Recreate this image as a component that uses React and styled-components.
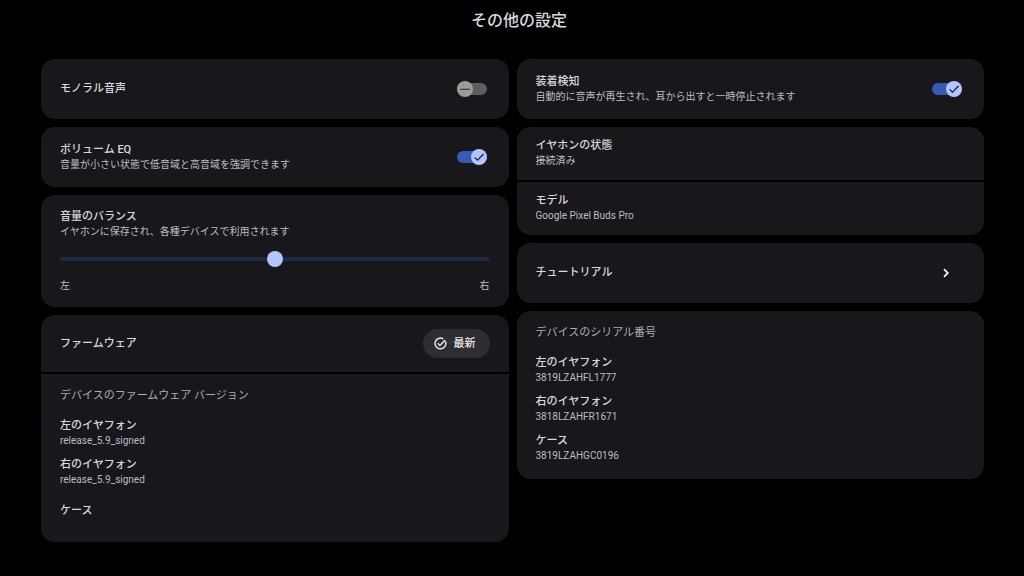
import React, { useId, useState } from 'react'
import styled, { createGlobalStyle } from 'styled-components';


const leftVersions = [
    { name: '左のイヤフォン', value: 'release_5.9_signed' },
    { name: '右のイヤフォン', value: 'release_5.9_signed' },
    { name: 'ケース', value: '' },
];

const serialNumbers = [
    { name: '左のイヤフォン', value: '3819LZAHFL1777' },
    { name: '右のイヤフォン', value: '3818LZAHFR1671' },
    { name: 'ケース', value: '3819LZAHGC0196' },
];


function ToggleRow({ title, description, defaultOn }) {

    const [on, setOn] = useState(Boolean(defaultOn));
    const id = useId();

    return (
        <Row>
            <RowText as="label" htmlFor={id}>
                <Label>{title}</Label>
                {description && <Detail>{description}</Detail>}
            </RowText>
            <Switch>
                <SwitchInput id={id} type="checkbox" checked={on} onChange={() => setOn(!on)} />
                <Knob $on={on}>
                    <svg width="16" height="16" viewBox="0 0 16 16" fill="none" stroke={on ? '#16213f' : '#3f3f42'} strokeWidth="1.3">
                        {on ? <path d="M3.6 8.4l2.9 2.8 6-6.2" /> : <path d="M3.2 8.3h9.6" />}
                    </svg>
                </Knob>
            </Switch>
        </Row>
    )
}

function DeviceList({ heading, items }) {
    return (
        <ListSection>
            <ListHeading>{heading}</ListHeading>
            <List>
                {
                    items.map((item) => (
                        <ListItem key={item.name}>
                            <Label>{item.name}</Label>
                            {item.value && <Detail>{item.value}</Detail>}
                        </ListItem>
                    ))
                }
            </List>
        </ListSection>
    )
}

function App() {

    const [balance, setBalance] = useState(50);

    return (
        <>
            <GlobalStyle />
            <Header>
                <Title>その他の設定</Title>
            </Header>

            <Columns>
                <Column>
                    <Card>
                        <ToggleRow title="モノラル音声" />
                    </Card>

                    <Card>
                        <ToggleRow
                            title="ボリューム EQ"
                            description="音量が小さい状態で低音域と高音域を強調できます"
                            defaultOn
                        />
                    </Card>

                    <Card>
                        <BalanceSection>
                            <RowText as="label" htmlFor="balance">
                                <Label>音量のバランス</Label>
                                <Detail>イヤホンに保存され、各種デバイスで利用されます</Detail>
                            </RowText>
                            <Slider
                                id="balance"
                                type="range"
                                min="0"
                                max="100"
                                value={balance}
                                onChange={(e) => setBalance(Number(e.target.value))}
                            />
                            <SliderEnds>
                                <Detail>左</Detail>
                                <Detail>右</Detail>
                            </SliderEnds>
                        </BalanceSection>
                    </Card>

                    <Card>
                        <FirmwareRow>
                            <Label>ファームウェア</Label>
                            <StatusButton type="button">
                                <svg width="13" height="13" viewBox="0 0 13 13" fill="none" stroke="currentColor" strokeWidth="1.5">
                                    <path d="M11.5 4.6A5.4 5.4 0 1 1 9.3 1.9" />
                                    <path d="M3.7 6.3l2.2 2.2 5.3-5.4" />
                                </svg>
                                最新
                            </StatusButton>
                        </FirmwareRow>
                        <DeviceList heading="デバイスのファームウェア バージョン" items={leftVersions} />
                    </Card>
                </Column>

                <Column>
                    <Card>
                        <ToggleRow
                            title="装着検知"
                            description="自動的に音声が再生され、耳から出すと一時停止されます"
                            defaultOn
                        />
                    </Card>

                    <Card>
                        <InfoRow>
                            <Label>イヤホンの状態</Label>
                            <Detail>接続済み</Detail>
                        </InfoRow>
                        <InfoRow>
                            <Label>モデル</Label>
                            <Detail>Google Pixel Buds Pro</Detail>
                        </InfoRow>
                    </Card>

                    <Card>
                        <LinkRow href="#tutorial">
                            <Label>チュートリアル</Label>
                            <ChevronSlot>
                                <svg width="8" height="10" viewBox="0 0 8 10" fill="none" stroke="#f1f1f4" strokeWidth="1.8">
                                    <path d="M2 1.2L5.8 5 2 8.8" />
                                </svg>
                            </ChevronSlot>
                        </LinkRow>
                    </Card>

                    <Card>
                        <DeviceList heading="デバイスのシリアル番号" items={serialNumbers} />
                    </Card>
                </Column>
            </Columns>
        </>
    )
}

export default App;


const GlobalStyle = createGlobalStyle`
    * {
        box-sizing: border-box;
    }

    body {
        margin: 0;
        background-color: #000;
        color: #d9d8dd;
        font-family: Roboto, "Noto Sans CJK JP", sans-serif;
        font-size: 11px;
        line-height: 16px;
    }
`;


const Header = styled.header`
    padding: 9px 0 26px 14px;
    text-align: center;
`;

const Title = styled.h1`
    margin: 0;
    font-size: 16px;
    line-height: 24px;
    font-weight: 500;
`;

const Columns = styled.main`
    display: grid;
    grid-template-columns: 1fr 1fr;
    align-items: start;
    gap: 8px;
    padding: 0 40px 24px 41px;
`;

const Column = styled.div`
    display: flex;
    flex-direction: column;
    gap: 8px;
    min-width: 0;
`;

/* rows inside one card are split by a thin black gap */
const Card = styled.section`
    display: flex;
    flex-direction: column;
    gap: 2px;
    border-radius: 14px;
    overflow: hidden;

    > * {
        background-color: #18171c;
    }
`;

const Row = styled.div`
    display: flex;
    align-items: center;
    justify-content: space-between;
    min-height: 60px;
    padding: 14px 19px;
`;

const LinkRow = styled(Row).attrs({ as: 'a' })`
    color: inherit;
    text-decoration: none;
`;

const FirmwareRow = styled(Row)`
    min-height: 0;
`;

const RowText = styled.div`
    display: flex;
    flex-direction: column;
`;

const InfoRow = styled.div`
    display: flex;
    flex-direction: column;
    padding: 11px 19px 12px;
`;

const Label = styled.span`
    font-size: 11px;
    line-height: 16px;
    font-weight: 500;
`;

const Detail = styled.span`
    color: #bdbcc1;
    font-size: 10px;
    line-height: 14px;
`;

const Switch = styled.span`
    position: relative;
    display: flex;
    align-items: center;
    width: 30px;
    height: 16px;
    margin-right: 3px;
`;

const SwitchInput = styled.input`
    appearance: none;
    width: 30px;
    height: 12px;
    margin: 0;
    border-radius: 6px;
    background-color: #5e5e60;
    cursor: pointer;

    &:checked {
        background-color: #375bb4;
    }
`;

const Knob = styled.span`
    position: absolute;
    top: 0;
    ${({ $on }) => ($on ? 'right: 0;' : 'left: 0;')}
    display: flex;
    width: 16px;
    height: 16px;
    border-radius: 50%;
    background-color: ${({ $on }) => ($on ? '#b3c5fd' : '#9c9b9c')};
    pointer-events: none;
`;

const BalanceSection = styled.div`
    display: flex;
    flex-direction: column;
    gap: 12px;
    padding: 14px 19px;
`;

const Slider = styled.input`
    appearance: none;
    width: 100%;
    height: 16px;
    margin: 0;
    background: transparent;
    cursor: pointer;

    &::-webkit-slider-runnable-track {
        height: 4px;
        border-radius: 2px;
        background-color: #1f2943;
    }

    &::-webkit-slider-thumb {
        appearance: none;
        width: 16px;
        height: 16px;
        margin-top: -6px;
        border-radius: 50%;
        background-color: #b3c5fd;
    }
`;

const SliderEnds = styled.div`
    display: flex;
    justify-content: space-between;
`;

const StatusButton = styled.button`
    display: flex;
    align-items: center;
    gap: 7px;
    height: 29px;
    padding: 0 14px 0 11px;
    border: none;
    border-radius: 15px;
    background-color: #2e2d32;
    color: #e4e3e8;
    font-family: inherit;
    font-size: 11px;
    line-height: 16px;
    font-weight: 500;
    cursor: pointer;
`;

const ChevronSlot = styled.span`
    display: flex;
    justify-content: center;
    width: 38px;
`;

const ListSection = styled.div`
    padding: 14px 19px 16px;
`;

const ListHeading = styled.h2`
    margin: 0 0 14px;
    color: #adacb1;
    font-size: 11px;
    line-height: 16px;
    font-weight: 400;
`;

const List = styled.ul`
    display: flex;
    flex-direction: column;
    gap: 9px;
    margin: 0;
    padding: 0;
    list-style: none;
`;

const ListItem = styled.li`
    display: flex;
    flex-direction: column;
    justify-content: center;
    min-height: 30px;
`;
